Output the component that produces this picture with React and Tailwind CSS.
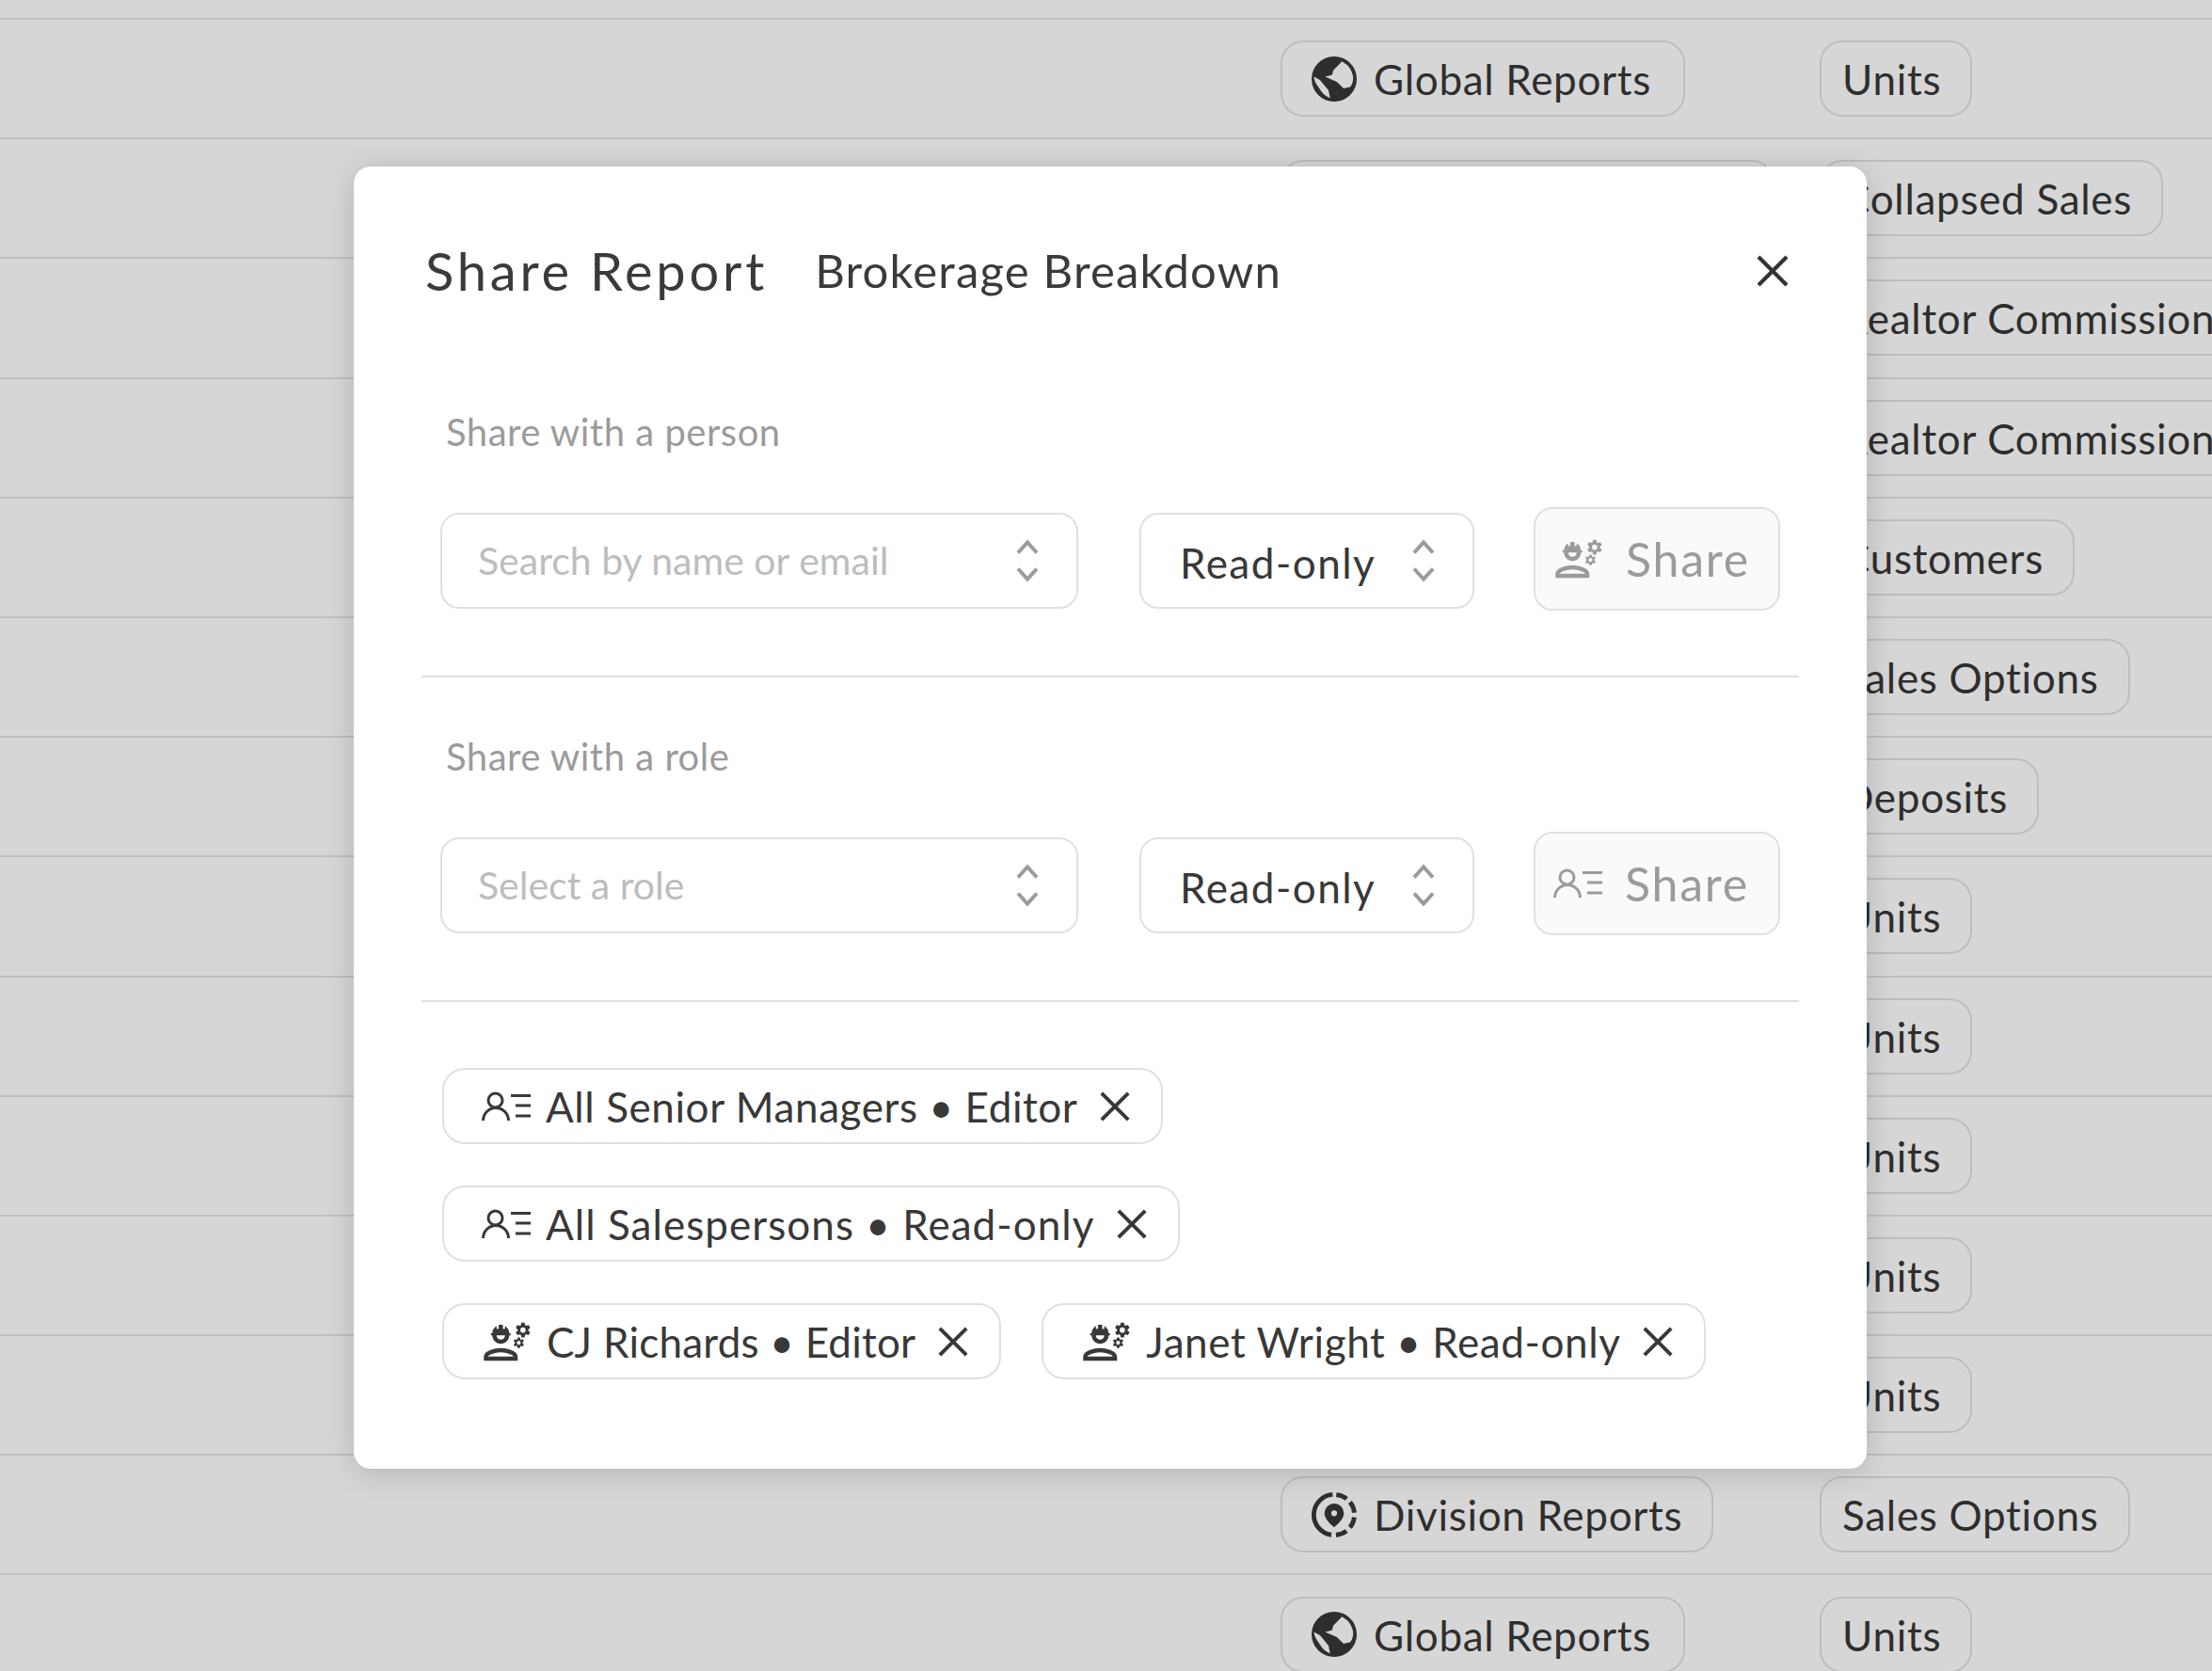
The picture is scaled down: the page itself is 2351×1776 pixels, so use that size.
import { MdOutlineEngineering } from 'react-icons/md'

const rows = [
  { scope: 'global', name: 'Units' },
  { scope: 'wide', name: 'Collapsed Sales' },
  { scope: 'global', name: 'Realtor Commission Report' },
  { scope: 'global', name: 'Realtor Commission Report' },
  { scope: 'global', name: 'Customers' },
  { scope: 'global', name: 'Sales Options' },
  { scope: 'global', name: 'Deposits' },
  { scope: 'global', name: 'Units' },
  { scope: 'global', name: 'Units' },
  { scope: 'global', name: 'Units' },
  { scope: 'global', name: 'Units' },
  { scope: 'global', name: 'Units' },
  { scope: 'division', name: 'Sales Options' },
  { scope: 'global', name: 'Units' },
]

function GlobeIcon() {
  return (
    <svg viewBox="2 2 20 20" className="w-[48px] h-[48px] shrink-0" fill="#2e2e2e">
      <path
        fillRule="evenodd"
        d="M12 2a10 10 0 1 0 0 20 10 10 0 0 0 0-20zM14.700 5 11.700 8 11 10.200 8 11 13.200 13.200 16.200 16.200 19.200 15.400C20.300 14 20.500 12.500 20.400 11 20 9 19.400 7.700 18.400 6.500 17.500 5.500 16.500 4.800 15.400 4.200zM3 11C3.200 12.800 3.900 14.200 5 15.400 5.900 17 7 18.400 8 19.200 8.800 19.800 9.500 20.200 10.200 20.400L9.500 17 5.700 12.400z"
      />
    </svg>
  )
}

function DivisionIcon() {
  return (
    <svg viewBox="2 2 20 20" className="w-[48px] h-[48px] shrink-0" fill="none">
      <circle cx="12" cy="12" r="9" stroke="#2e2e2e" strokeWidth="2" strokeDasharray="5 2.100 5 2.100 5 2.100 5 2.100 26.100 2.100" transform="rotate(-84 12 12)" />
      <path
        fill="#2e2e2e"
        fillRule="evenodd"
        d="M12 7a4.300 4.300 0 0 0-4.300 4.300c0 2.500 2.500 4.700 4.300 6.200 1.800-1.500 4.300-3.700 4.300-6.200A4.300 4.300 0 0 0 12 7zm0 3a1.300 1.300 0 1 1 0 2.600 1.300 1.300 0 0 1 0-2.600z"
      />
    </svg>
  )
}

function RoleIcon({ className }) {
  return (
    <svg viewBox="0 0 53 32" className={className} fill="none" stroke="currentColor" strokeWidth="3">
      <circle cx="14.500" cy="9.500" r="7.500" />
      <path d="M1.500 31a13.500 13.500 0 0 1 27 0" />
      <path d="M31 4.500h21M36 15h16M36 26h16" />
    </svg>
  )
}

function CloseIcon({ className }) {
  return (
    <svg viewBox="0 0 24 24" className={className} fill="none" stroke="currentColor" strokeWidth="2.800">
      <path d="M2 2l20 20M22 2L2 22" />
    </svg>
  )
}

function UpDown() {
  return (
    <svg viewBox="0 0 24 46" className="w-[24px] h-[46px] shrink-0" fill="none" stroke="#9b9b9b" strokeWidth="4">
      <path d="M2 14.500l10-11 10 11M2 31.500l10 11 10-11" />
    </svg>
  )
}

function BgChip({ icon, label, className = '' }) {
  return (
    <div className={`flex items-center gap-[18px] h-[81px] rounded-[24px] border-2 border-[#bdbdbd] text-[#2e2e2e] text-[44px] tracking-[0.7px] whitespace-nowrap justify-self-start ${className}`}>
      {icon}
      <span className="mt-[1px]">{label}</span>
    </div>
  )
}

function TableRow({ scope, name }) {
  return (
    <div className="grid grid-cols-[1361px_573px_1fr] items-center h-[127.2px] border-b-2 border-[#bfbfbf]">
      <div />
      {scope === 'division' ? (
        <BgChip className="pl-[31px] pr-[31px]" icon={<DivisionIcon />} label="Division Reports" />
      ) : scope === 'wide' ? (
        <BgChip className="pl-[31px] w-[525px]" icon={<GlobeIcon />} label="Corporate Reports" />
      ) : (
        <BgChip className="pl-[31px] pr-[34px]" icon={<GlobeIcon />} label="Global Reports" />
      )}
      <BgChip className="pl-[22px] pr-[31px]" label={name} />
    </div>
  )
}

function SelectBox({ placeholder, width, value }) {
  return (
    <div className="flex items-center justify-between h-[102px] mt-[6px] bg-white rounded-[20px] border-2 border-[#e0e0e0] pl-[38px] pr-[40px]" style={{ width }}>
      {placeholder ? (
        <span className="text-[#bdbdbd] text-[41px]">{placeholder}</span>
      ) : (
        <span className="text-[#383838] text-[44px] tracking-[1.5px] mt-[4px] ml-[3px]">{value}</span>
      )}
      <UpDown />
    </div>
  )
}

function ShareSection({ label, placeholder, icon }) {
  return (
    <div>
      <div className="pl-[26px] h-[50px] leading-[50px] text-[40px] tracking-[0.5px] text-[#9b9b9b]">{label}</div>
      <div className="flex items-start mt-[55px] pl-[20px] gap-[65px]">
        <SelectBox placeholder={placeholder} width={678} />
        <SelectBox value="Read-only" width={356} />
        <button className="flex items-center gap-[23px] w-[262px] h-[110px] -ml-[2px] pl-[19px] bg-[#fafafa] rounded-[20px] border-2 border-[#e0e0e0] text-[#9b9b9b] text-[50px] tracking-[1.8px]">
          {icon}
          Share
        </button>
      </div>
    </div>
  )
}

function Tag({ icon, label, role, className = 'tracking-[0.6px]' }) {
  return (
    <div className={`flex items-center h-[81px] pl-[40px] pr-[32px] bg-white rounded-[24px] border-2 border-[#e0e0e0] text-[#383838] text-[44px] whitespace-nowrap ${className}`}>
      {icon}
      <span className="ml-[15px]">{label} • {role}</span>
      <CloseIcon className="w-[34px] h-[34px] ml-[23px]" />
    </div>
  )
}

export default function App() {
  const worker = <MdOutlineEngineering className="w-[54px] h-[54px] shrink-0" />
  const roleTag = <RoleIcon className="w-[53px] h-[32px] shrink-0" />

  return (
    <div className="relative w-[2351px] h-[1776px] overflow-hidden bg-[#d6d6d6] font-['Lato',sans-serif]">
      <div className="h-[21px] border-b-2 border-[#bfbfbf]" />
      {rows.map((row, i) => (
        <TableRow key={i} scope={row.scope} name={row.name} />
      ))}

      {/* Share modal */}
      <div className="absolute left-[376px] top-[177px] w-[1608px] h-[1384px] bg-white rounded-[18px] shadow-[0_4px_32px_rgba(0,0,0,0.16)] px-[72px] pt-[76px]">
        <div className="flex items-center justify-between h-[70px] pl-[4px] pr-[10px]">
          <div className="flex items-center">
            <span className="text-[56px] text-[#3a3a3a] tracking-[3.8px]">Share Report</span>
            <span className="text-[49px] text-[#3a3a3a] tracking-[1.2px] ml-[50px]">Brokerage Breakdown</span>
          </div>
          <CloseIcon className="w-[36px] h-[36px] text-[#333333]" />
        </div>

        <div className="mt-[111px]">
          <ShareSection
            label="Share with a person"
            placeholder="Search by name or email"
            icon={<MdOutlineEngineering className="w-[54px] h-[54px] shrink-0" />}
          />
        </div>
        <div className="mt-[69px] mb-[59px] h-[2px] bg-[#e0e0e0]" />
        <ShareSection
          label="Share with a role"
          placeholder="Select a role"
          icon={<RoleIcon className="w-[53px] h-[32px] shrink-0" />}
        />
        <div className="mt-[69px] mb-[70px] h-[2px] bg-[#e0e0e0]" />

        <div className="flex flex-col items-start gap-y-[44px] ml-[22px]">
          <Tag icon={roleTag} label="All Senior Managers" role="Editor" />
          <Tag icon={roleTag} label="All Salespersons" role="Read-only" className="tracking-[1.05px]" />
          <div className="flex gap-x-[43px]">
            <Tag icon={worker} label="CJ Richards" role="Editor" className="tracking-[0.23px]" />
            <Tag icon={worker} label="Janet Wright" role="Read-only" />
          </div>
        </div>
      </div>
    </div>
  )
}
